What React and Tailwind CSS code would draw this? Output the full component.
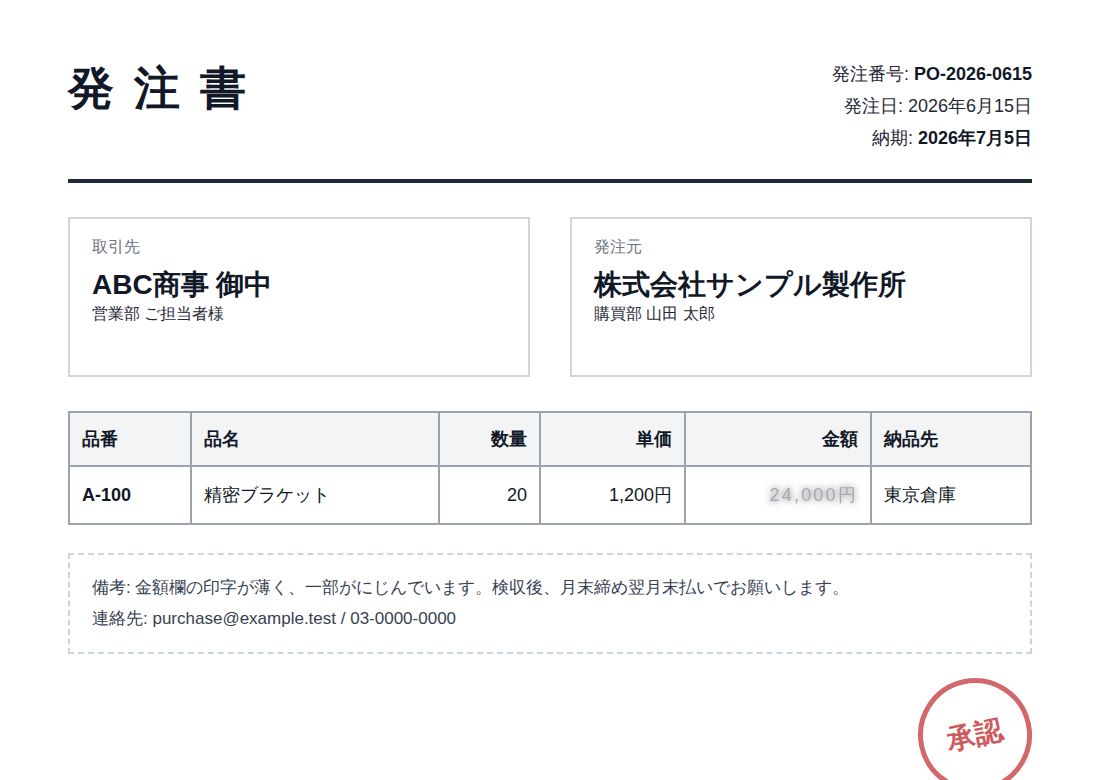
export default function App() {
  const th = "border-2 border-[#9ca3af] bg-[#f3f4f6] px-3 py-3 font-bold text-[#111827]";
  const td = "border-2 border-[#9ca3af] px-3 py-[14px] text-[#111827]";
  return (
    <div lang="ja" className="relative h-[780px] w-[1100px] overflow-hidden bg-white px-[68px] pt-[56px] text-[#1f2937]" style={{ fontFamily: '"Liberation Sans", sans-serif' }}>
      <div className="flex justify-between border-b-4 border-[#1f2937] h-[127px]">
        <h1 className="text-[46px] font-bold tracking-[0.08em] leading-[64px] text-[#111827]">発 注 書</h1>
        <div className="pt-[2px] text-right text-lg leading-8">
          <div>発注番号: <b className="text-[#111827]">PO-2026-0615</b></div>
          <div>発注日: 2026年6月15日</div>
          <div>納期: <b className="text-[#111827]">2026年7月5日</b></div>
        </div>
      </div>
      <div className="mt-[34px] grid grid-cols-2 gap-10">
        <div className="h-40 border-2 border-[#d1d5db] px-[22px] py-[18px]">
          <div className="text-base leading-5 text-[#6b7280]">取引先</div>
          <div className="mt-[10px] text-[28px] font-bold leading-9 text-[#111827]">ABC商事 御中</div>
          <div className="mt-px text-base leading-5 text-[#1f2937]">営業部 ご担当者様</div>
        </div>
        <div className="h-40 border-2 border-[#d1d5db] px-[22px] py-[18px]">
          <div className="text-base leading-5 text-[#6b7280]">発注元</div>
          <div className="mt-[10px] text-[28px] font-bold leading-9 text-[#111827]">株式会社サンプル製作所</div>
          <div className="mt-px text-base leading-5 text-[#1f2937]">購買部 山田 太郎</div>
        </div>
      </div>
      <table className="mt-[34px] w-full table-fixed border-collapse text-lg">
        <colgroup>
          <col className="w-[122px]" /><col className="w-[248px]" /><col className="w-[101px]" /><col className="w-[145px]" /><col className="w-[186px]" /><col />
        </colgroup>
        <thead>
          <tr>
            <th className={th + " text-left"}>品番</th>
            <th className={th + " text-left"}>品名</th>
            <th className={th + " text-right"}>数量</th>
            <th className={th + " text-right"}>単価</th>
            <th className={th + " text-right"}>金額</th>
            <th className={th + " text-left"}>納品先</th>
          </tr>
        </thead>
        <tbody>
          <tr>
            <td className={td + " font-bold"}>A-100</td>
            <td className={td}>精密ブラケット</td>
            <td className={td + " text-right"}>20</td>
            <td className={td + " text-right"}>1,200円</td>
            <td className={td + " text-right"}><span className="tracking-[2.2px] text-[#a8a8ae] [text-shadow:0_0_7px_#52525b] blur-[0.4px]">24,000円</span></td>
            <td className={td}>東京倉庫</td>
          </tr>
        </tbody>
      </table>
      <div className="mt-[28px] h-[101px] border-2 border-dashed border-[#cbd5e1] px-[22px] pt-[18px] text-[17px] leading-[30.6px] text-[#374151]">
        <div>備考: 金額欄の印字が薄く、一部がにじんでいます。検収後、月末締め翌月末払いでお願いします。</div>
        <div>連絡先: purchase@example.test / 03-0000-0000</div>
      </div>
      <div className="absolute left-[918px] top-[678px] flex h-[114px] w-[114px] -rotate-12 items-center justify-center rounded-full border-[5px] border-[#d2686a] text-[28px] font-bold text-[#cd5a5c]">承認</div>
    </div>
  );
}
